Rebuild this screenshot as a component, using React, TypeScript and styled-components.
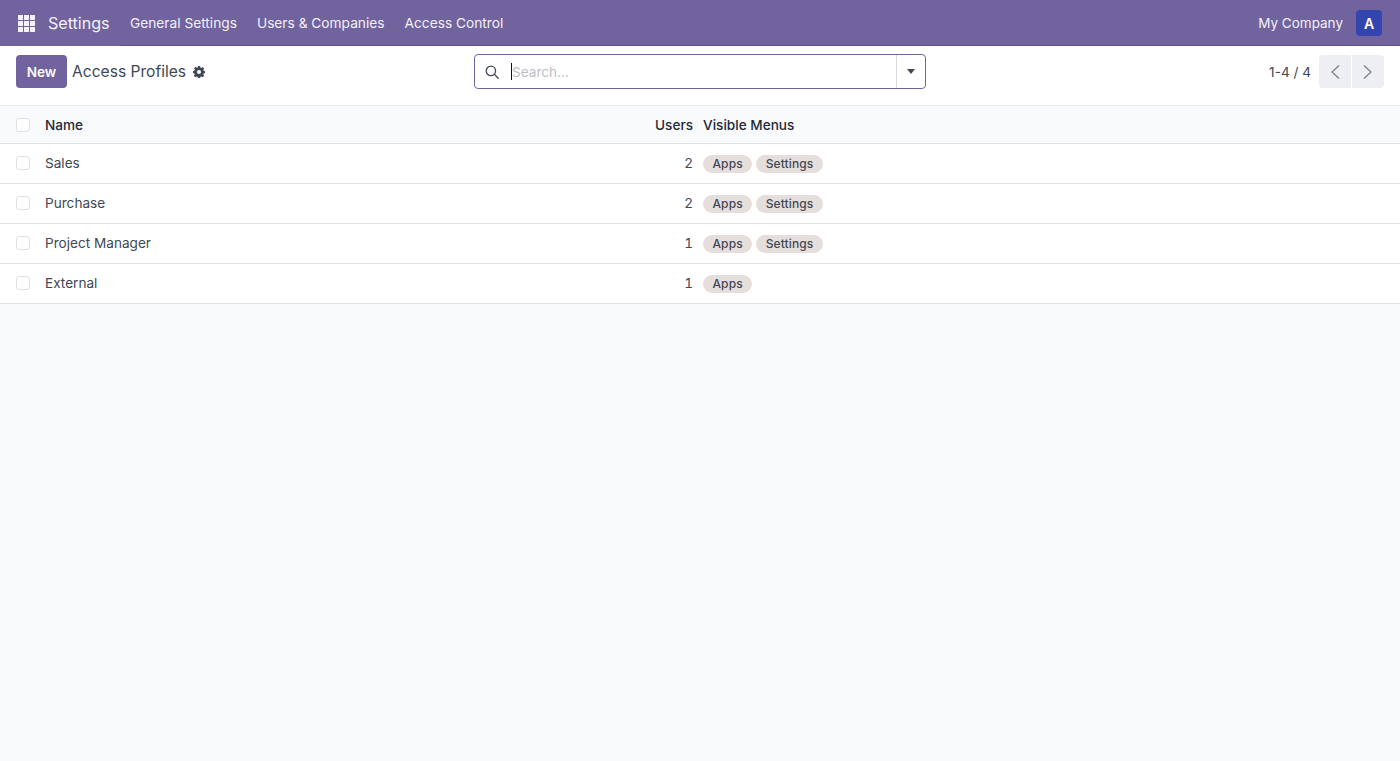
import React from 'react';
import styled, { createGlobalStyle } from 'styled-components';

const Global = createGlobalStyle`
	html, body {
		margin: 0;
		padding: 0;
		height: 100%;
		background: #f9fafb;
		font-family: "Inter", "Liberation Sans", sans-serif;
		font-size: 13.6px;
		color: #414854;
		overflow: hidden;
	}
	#root {
		height: 100%;
	}
	* {
		box-sizing: border-box;
	}
`;

const Page = styled.div`
	display: flex;
	flex-direction: column;
	height: 100%;
`;

const NavBar = styled.header`
	display: flex;
	align-items: center;
	justify-content: space-between;
	height: 46px;
	background: #71639e;
	color: #fff;
	box-shadow: inset 0 -1px 0 #5d4f8a;
`;

const NavLeft = styled.div`
	display: flex;
	align-items: center;
	height: 100%;
`;

const BrandGroup = styled.div`
	display: flex;
	align-items: center;
	width: 120px;
	height: 100%;
	margin-right: 10px;
	background: #71639e;
`;

const AppsButton = styled.div`
	display: flex;
	align-items: center;
	justify-content: center;
	width: 17px;
	margin: 0 13px 0 18px;
`;

const Brand = styled.div`
	font-size: 16.1px;
	color: #f3f1f7;
	white-space: nowrap;
`;

const NavItem = styled.div`
	font-size: 13.72px;
	margin: 0 20px 1px 0;
	color: #f3f1f7;
	white-space: nowrap;
`;

const NavRight = styled.div`
	display: flex;
	align-items: center;
	padding-right: 18px;
`;

const Company = styled.div`
	font-size: 13.5px;
	color: #f3f1f7;
	margin: 0 13px 1px 0;
`;

const Avatar = styled.div`
	display: flex;
	align-items: center;
	justify-content: center;
	width: 26px;
	height: 26px;
	border-radius: 4px;
	background: #3346b0;
	color: #fff;
	font-size: 14px;
	font-weight: 600;
`;

const ControlPanel = styled.div`
	display: grid;
	grid-template-columns: 1fr 452px 1fr;
	align-items: center;
	height: 60px;
	padding: 0 16px 8px;
	background: #fff;
	border-bottom: 1px solid #e5e7eb;
`;

const PanelLeft = styled.div`
	display: flex;
	align-items: center;
`;

const NewButton = styled.button`
	width: 51px;
	height: 33px;
	border: 0;
	border-radius: 4px;
	background: #71639e;
	color: #fff;
	font-family: inherit;
	font-size: 13.6px;
	font-weight: 600;
	padding: 0;
	margin-right: 5px;
`;

const Title = styled.div`
	font-size: 15.6px;
	color: #414854;
	margin-right: 7px;
	white-space: nowrap;
`;

const SearchBox = styled.div`
	display: flex;
	align-items: stretch;
	height: 35px;
	border: 1px solid #71639e;
	border-radius: 4px;
	background: #fff;
`;

const SearchIcon = styled.div`
	display: flex;
	align-items: center;
	justify-content: center;
	width: 36px;
	padding-right: 3px;
	flex-shrink: 0;
	color: #414854;
`;

const SearchField = styled.div`
	flex: 1;
	display: flex;
	align-items: center;
	color: #bcc0c8;
`;

const Caret = styled.span`
	width: 1px;
	height: 17px;
	background: #111;
`;

const SearchToggle = styled.div`
	display: flex;
	align-items: center;
	justify-content: center;
	width: 29px;
	border-left: 1px solid #d8dadd;
`;

const Triangle = styled.span`
	width: 0;
	height: 0;
	border-left: 4.5px solid transparent;
	border-right: 4.5px solid transparent;
	border-top: 5px solid #414854;
`;

const PanelRight = styled.div`
	display: flex;
	align-items: center;
	justify-content: flex-end;
`;

const PagerText = styled.div`
	margin-right: 8px;
`;

const PagerGroup = styled.div`
	display: flex;
	gap: 1px;
`;

const PagerButton = styled.div<{ $side: 'left' | 'right' }>`
	display: flex;
	align-items: center;
	justify-content: center;
	width: 32px;
	height: 33px;
	background: #eeeff2;
	color: #7b818c;
	border-radius: ${(p) => (p.$side === 'left' ? '4px 0 0 4px' : '0 4px 4px 0')};
`;

const Table = styled.div`
	display: flex;
	flex-direction: column;
`;

const Row = styled.div<{ $head?: boolean }>`
	display: grid;
	grid-template-columns: 45px 600px 48px 1fr;
	align-items: center;
	height: ${(p) => (p.$head ? '38px' : '40px')};
	background: ${(p) => (p.$head ? '#f9fafb' : '#fff')};
	color: ${(p) => (p.$head ? '#1f2937' : '#414854')};
	font-weight: ${(p) => (p.$head ? 500 : 400)};
	border-bottom: 1px solid #dee2e6;
	padding-bottom: ${(p) => (p.$head ? '0' : '2px')};
`;

const CheckCell = styled.div`
	display: flex;
	padding-left: 16px;
`;

const CheckBox = styled.span`
	width: 14px;
	height: 14px;
	border: 1px solid #dee0e4;
	border-radius: 3px;
	background: #fff;
`;

const NameCell = styled.div`
	white-space: nowrap;
`;

const UsersCell = styled.div`
	text-align: right;
	font-variant-numeric: tabular-nums;
`;

const MenusHead = styled.div`
	padding-left: 10px;
`;

const MenusCell = styled.div`
	display: flex;
	align-items: center;
	gap: 4px;
	padding-left: 10px;
	margin-top: 2px;
`;

const Tag = styled.span`
	display: flex;
	align-items: center;
	height: 18px;
	padding: 0 9.5px;
	border-radius: 9px;
	background: #e6dedd;
	color: #414854;
	font-size: 12px;
	font-weight: 500;
	letter-spacing: 0.1px;
`;

const rows = [
	{ name: 'Sales', users: 2, menus: ['Apps', 'Settings'] },
	{ name: 'Purchase', users: 2, menus: ['Apps', 'Settings'] },
	{ name: 'Project Manager', users: 1, menus: ['Apps', 'Settings'] },
	{ name: 'External', users: 1, menus: ['Apps'] },
];

const AppsIcon = () => (
	<svg width="17" height="17" viewBox="0 0 17 17" fill="#f3f1f7">
		{[0, 6, 12].map((y) =>
			[0, 6, 12].map((x) => <rect key={`${x}-${y}`} x={x} y={y} width="5" height="5" />)
		)}
	</svg>
);

const GearIcon = () => (
	<svg width="12" height="12" viewBox="0 0 24 24" fill="#414854">
		<path
			fillRule="evenodd"
			d="M9.8 0h4.4l.6 3.2 1.7.7 2.7-1.8 3.1 3.1-1.8 2.7.7 1.7 3.2.6v4.4l-3.2.6-.7 1.7 1.8 2.7-3.1 3.1-2.7-1.8-1.7.7-.6 3.2H9.8l-.6-3.2-1.7-.7-2.7 1.8-3.1-3.1 1.8-2.7-.7-1.7L0 14.2V9.8l3.2-.6.7-1.7-1.8-2.7 3.1-3.1 2.7 1.8 1.7-.7zM12 8a4 4 0 1 0 0 8 4 4 0 0 0 0-8z"
		/>
	</svg>
);

const MagnifierIcon = () => (
	<svg width="14" height="14" viewBox="0 0 15 15" fill="none" stroke="currentColor" strokeWidth="1.4">
		<circle cx="6.3" cy="6.3" r="5" />
		<path d="M10 10l4.2 4.2" strokeLinecap="round" />
	</svg>
);

const Chevron = ({ dir }: { dir: 'left' | 'right' }) => (
	<svg width="10" height="16" viewBox="0 0 10 16" fill="none" stroke="currentColor" strokeWidth="1.3">
		<path d={dir === 'left' ? 'M9 1.5L2 8l7 6.5' : 'M1 1.5L8 8l-7 6.5'} />
	</svg>
);

const App = () => {
	return (
		<Page>
			<Global />
			<NavBar>
				<NavLeft>
					<BrandGroup>
						<AppsButton>
							<AppsIcon />
						</AppsButton>
						<Brand>Settings</Brand>
					</BrandGroup>
					<NavItem>General Settings</NavItem>
					<NavItem>Users &amp; Companies</NavItem>
					<NavItem>Access Control</NavItem>
				</NavLeft>
				<NavRight>
					<Company>My Company</Company>
					<Avatar>A</Avatar>
				</NavRight>
			</NavBar>
			<ControlPanel>
				<PanelLeft>
					<NewButton>New</NewButton>
					<Title>Access Profiles</Title>
					<GearIcon />
				</PanelLeft>
				<SearchBox>
					<SearchIcon>
						<MagnifierIcon />
					</SearchIcon>
					<SearchField>
						<Caret />
						Search...
					</SearchField>
					<SearchToggle>
						<Triangle />
					</SearchToggle>
				</SearchBox>
				<PanelRight>
					<PagerText>1-4 / 4</PagerText>
					<PagerGroup>
						<PagerButton $side="left">
							<Chevron dir="left" />
						</PagerButton>
						<PagerButton $side="right">
							<Chevron dir="right" />
						</PagerButton>
					</PagerGroup>
				</PanelRight>
			</ControlPanel>
			<Table>
				<Row $head>
					<CheckCell>
						<CheckBox />
					</CheckCell>
					<NameCell>Name</NameCell>
					<UsersCell>Users</UsersCell>
					<MenusHead>Visible Menus</MenusHead>
				</Row>
				{rows.map((row) => (
					<Row key={row.name}>
						<CheckCell>
							<CheckBox />
						</CheckCell>
						<NameCell>{row.name}</NameCell>
						<UsersCell>{row.users}</UsersCell>
						<MenusCell>
							{row.menus.map((m) => (
								<Tag key={m}>{m}</Tag>
							))}
						</MenusCell>
					</Row>
				))}
			</Table>
		</Page>
	);
};

export default App;
